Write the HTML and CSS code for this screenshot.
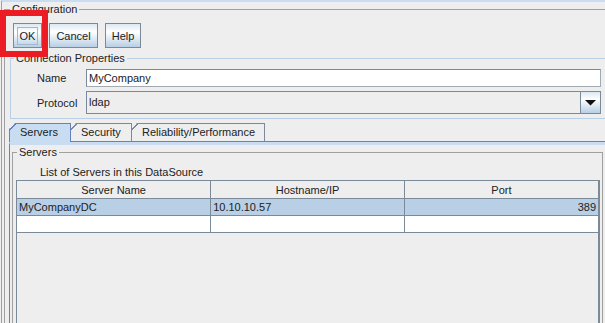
FILE: index.html
```html
<!DOCTYPE html>
<html lang="en">
<head>
    <meta charset="UTF-8">
    <title>Configuration</title>
    <link rel="stylesheet" href="styles.css">
</head>
<body>
    <div class="app">
        <fieldset class="group config">
            <legend>Configuration</legend>
            <div class="buttons">
                <button class="btn btn-ok"><span class="focus">OK</span></button>
                <button class="btn btn-cancel">Cancel</button>
                <button class="btn btn-help">Help</button>
            </div>

            <fieldset class="group conn">
                <legend>Connection Properties</legend>
                <div class="form">
                    <label for="name">Name</label>
                    <input class="field" id="name" value="MyCompany">
                    <label>Protocol</label>
                    <div class="combo">
                        <span class="combo-text">ldap</span>
                        <span class="combo-arrow">
                            <svg width="11" height="6" viewBox="0 0 11 6"><path d="M0 0h11L5.5 5.5z" fill="#111"/></svg>
                        </span>
                    </div>
                </div>
            </fieldset>

            <div class="tabs">
                <div class="tab active">Servers</div>
                <div class="tab">Security</div>
                <div class="tab tab-wide">Reliability/Performance</div>
            </div>
            <div class="tabpanel">
                <fieldset class="group servers">
                    <legend>Servers</legend>
                    <div class="caption">List of Servers in this DataSource</div>
                    <div class="scroll">
                        <table class="grid">
                            <thead>
                                <tr><th>Server Name</th><th>Hostname/IP</th><th>Port</th></tr>
                            </thead>
                            <tbody>
                                <tr class="selected"><td>MyCompanyDC</td><td>10.10.10.57</td><td class="num">389</td></tr>
                                <tr><td></td><td></td><td></td></tr>
                            </tbody>
                        </table>
                    </div>
                </fieldset>
            </div>
        </fieldset>

        <div class="callout"></div>
    </div>
</body>
</html>
```

FILE: styles.css
```css
html, body {
    margin: 0;
    padding: 0;
    height: 100%;
    overflow: hidden;
}
body {
    font-family: "Liberation Sans", Arial, sans-serif;
    font-size: 11px;
    color: #222;
    background-color: #eeeeee;
}
.app {
    position: relative;
    margin-left: 1px;
    padding-left: 2px;
    height: 100%;
    box-sizing: border-box;
    border-top: 2px solid #c8ddf2;
    border-left: 1px solid #a0a0a0;
}

/* titled borders */
.group {
    margin: 0;
    padding: 0;
    min-width: 0;
    box-sizing: border-box;
}
.group legend {
    padding: 0 2px;
    line-height: 14px;
    height: 14px;
}
.config {
    display: flex;
    flex-direction: column;
    width: 612px;
    height: calc(100vh - 2px);
    border: 1px solid #a0a0a0;
    border-bottom: none;
}
.config > legend {
    margin-left: 5px;
}

/* buttons */
.buttons {
    display: flex;
    gap: 7px;
    margin: 7px 0 0 8px;
}
.btn {
    height: 25px;
    padding: 0;
    font-family: inherit;
    font-size: 11px;
    color: #222;
    border: 1px solid #7a8a99;
    border-radius: 0;
    background: linear-gradient(to bottom, #dde8f3 0%, #ffffff 35%, #b8cfe5 100%);
    display: flex;
    align-items: center;
    justify-content: center;
}
.btn-ok { width: 29px; }
.btn-cancel { width: 49px; }
.btn-help { width: 36px; }
.btn .focus {
    display: block;
    padding: 1px 2px;
    line-height: 14px;
    border: 1px solid #a3b8cc;
}

/* connection properties */
.conn {
    width: 600px;
    margin: 3px 0 0 5px;
    padding: 0 8px 4px 0;
    border: 1px solid #b8cfe5;
}
.conn > legend {
    margin-left: 3px;
}
.form {
    display: grid;
    grid-template-columns: 49px 1fr;
    row-gap: 4px;
    align-items: center;
    padding: 4px 0 0 26px;
}
.form label {
    line-height: 14px;
}
.field {
    height: 18px;
    box-sizing: border-box;
    margin: 0;
    padding: 0 2px;
    font-family: inherit;
    font-size: 11px;
    color: #222;
    border: 1px solid #7a8a99;
    border-right-color: #a0aab4;
    border-bottom-color: #a0aab4;
    background: #fff;
    outline: none;
}
.combo {
    display: flex;
    height: 23px;
    box-sizing: border-box;
    border: 1px solid #7a8a99;
    background: #eeeeee;
}
.combo-text {
    flex: 1;
    padding-left: 2px;
    line-height: 21px;
}
.combo-arrow {
    width: 19px;
    border-left: 1px solid #7a8a99;
    background: linear-gradient(to bottom, #dde8f3 0%, #ffffff 35%, #b8cfe5 100%);
    display: flex;
    align-items: center;
    justify-content: center;
}

/* tabs */
.tabs {
    display: flex;
    flex: none;
    margin: 4px 0 0 4px;
    height: 18px;
    border-bottom: 1px solid #6382bf;
}
.tab {
    width: 62px;
    height: 18px;
    box-sizing: border-box;
    margin-right: -1px;
    padding-left: 10px;
    line-height: 17px;
    border: 1px solid #7a8a99;
    border-bottom: none;
    background-origin: border-box;
    background-image: linear-gradient(135deg, transparent 4.6px, #7a8a99 4.6px, #7a8a99 5.8px, #eeeeee 5.8px);
    clip-path: polygon(0 6px, 6px 0, 100% 0, 100% 100%, 0 100%);
}
.tab.active {
    height: 19px;
    border-color: #6382bf;
    background-image: linear-gradient(135deg, transparent 4.6px, #6382bf 4.6px, #6382bf 5.8px, #c8ddf2 5.8px);
    position: relative;
    z-index: 1;
}
.tab-wide {
    width: 134px;
}
.tabpanel {
    flex: 1;
    min-height: 0;
    display: flex;
    margin-left: 4px;
    border-top: 3px solid #c8ddf2;
    border-left: 1px solid #6382bf;
}

/* servers */
.servers {
    display: flex;
    flex-direction: column;
    flex: none;
    width: 591px;
    margin-left: 2px;
    border: 1px solid #a0a0a0;
    border-bottom: none;
}
.servers > legend {
    margin-left: 4px;
}
.caption {
    margin: 6px 0 0 27px;
    line-height: 14px;
}
.scroll {
    flex: 1;
    min-height: 0;
    width: 584px;
    box-sizing: border-box;
    margin: 1px 0 0 3px;
    border: 1px solid #7a8a99;
    border-right-width: 2px;
    border-bottom: none;
    background: #eeeeee;
}
.grid {
    width: 100%;
    border-collapse: collapse;
    table-layout: fixed;
}
.grid th, .grid td {
    padding: 0 2px;
    border-left: 1px solid #7a8a99;
    border-bottom: 1px solid #7a8a99;
    font-weight: normal;
    white-space: nowrap;
}
.grid th:first-child, .grid td:first-child {
    border-left: none;
}
.grid th {
    height: 17px;
    background: #eeeeee;
    text-align: center;
}
.grid td {
    height: 16px;
    background: #fff;
}
.grid .selected td {
    background: #b8cfe5;
}
.grid td.num {
    text-align: right;
}

/* red highlight drawn over the OK button */
.callout {
    position: absolute;
    left: -2px;
    top: 8px;
    width: 48px;
    height: 47px;
    box-sizing: border-box;
    border: 6px solid #ec1c24;
}
```
